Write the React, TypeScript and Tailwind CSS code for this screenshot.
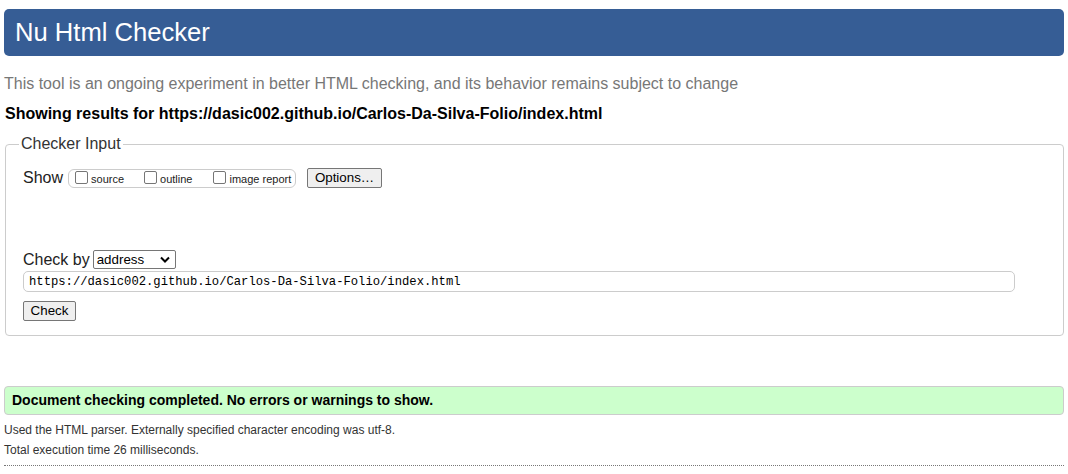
import React from "react";

const sans = { fontFamily: '"Liberation Sans", Arial, sans-serif' };

function Check({ label, className = "" }: { label: string; className?: string }) {
  return (
    <label className={`flex items-center ${className}`}>
      <input
        type="checkbox"
        className="appearance-none m-0 w-[13px] h-[13px] border border-[#767676] rounded-[2px] bg-white mt-[-2px]"
      />
      <span className="ml-[3px] text-[11px] leading-[13px] mt-[2px] text-[#222]">{label}</span>
    </label>
  );
}

export default function App() {
  return (
    <div className="w-[1068px] h-[474px] bg-white text-[#222] overflow-hidden" style={sans}>
      <div className="mt-[9px] mx-[4px] h-[47px] rounded-[5px] bg-[#365d95] flex items-center pl-[11px] text-[25.6px] text-white leading-none">
        Nu Html Checker
      </div>
      <p className="mt-[19px] ml-[4px] text-[16px] leading-[18px] text-[#777]">
        This tool is an ongoing experiment in better HTML checking, and its behavior remains subject to change
      </p>
      <p className="mt-[12px] ml-[5px] text-[16px] leading-[18px] font-bold text-black">
        Showing results for https://dasic002.github.io/Carlos-Da-Silva-Folio/index.html
      </p>
      <fieldset className="mt-[12px] ml-[5px] mr-[4px] border border-[#ccc] rounded-[4px] pl-[17px] pb-[14px]">
        <legend className="ml-[-4px] px-[2px] text-[16px] leading-[18px] text-[#333]">Checker Input</legend>
        <div className="mt-[15px] flex items-center h-[20px]">
          <span className="text-[16px] leading-[18px]">Show</span>
          <div className="ml-[5px] w-[228px] h-[19px] border border-[#ccc] rounded-[6px] flex items-center pl-[6px]">
            <Check label="source" />
            <Check label="outline" className="ml-[20px]" />
            <Check label="image report" className="ml-[21px]" />
          </div>
          <button className="ml-[11px] w-[75px] h-[20px] bg-[#efefef] border border-[#767676] rounded-[2px] text-[13.33px] leading-[16px] text-black">
            Options…
          </button>
        </div>
        <div className="mt-[62px] flex items-center h-[19px]">
          <span className="text-[16px] leading-[18px]">Check by</span>
          <div className="ml-[3px] w-[83px] h-[19px] border border-[#767676] rounded-[2px] bg-white flex items-center justify-between pl-[3px] pr-[5px] text-[13.33px] text-black">
            <span>address</span>
            <svg width="10" height="7" viewBox="0 0 10 7">
              <path d="M1 1.5 L5 5.5 L9 1.5" fill="none" stroke="#000" strokeWidth="2" />
            </svg>
          </div>
        </div>
        <input
          readOnly
          value="https://dasic002.github.io/Carlos-Da-Silva-Folio/index.html"
          className="mt-[2px] block w-[992px] h-[21px] border border-[#ccc] rounded-[5px] px-[5px] text-[12.2px] text-black"
          style={{ fontFamily: '"Liberation Mono", "DejaVu Sans Mono", monospace' }}
        />
        <button className="mt-[9px] block w-[53px] h-[20px] bg-[#efefef] border border-[#767676] rounded-[2px] text-[13.33px] leading-[16px] text-black">
          Check
        </button>
      </fieldset>
      <div className="mt-[50px] mx-[4px] h-[29px] border border-[#ccc] rounded-[4px] bg-[#ccffcc] flex items-center pl-[7px] text-[14px] font-bold text-black">
        Document checking completed. No errors or warnings to show.
      </div>
      <p className="mt-[8px] ml-[4px] text-[12px] leading-[14px] text-[#333]">
        Used the HTML parser. Externally specified character encoding was utf-8.
      </p>
      <p className="mt-[6px] ml-[4px] text-[12px] leading-[14px] text-[#333]">
        Total execution time 26 milliseconds.
      </p>
      <div className="mt-[8px] mx-[4px] border-t border-dotted border-[#777]" />
    </div>
  );
}
